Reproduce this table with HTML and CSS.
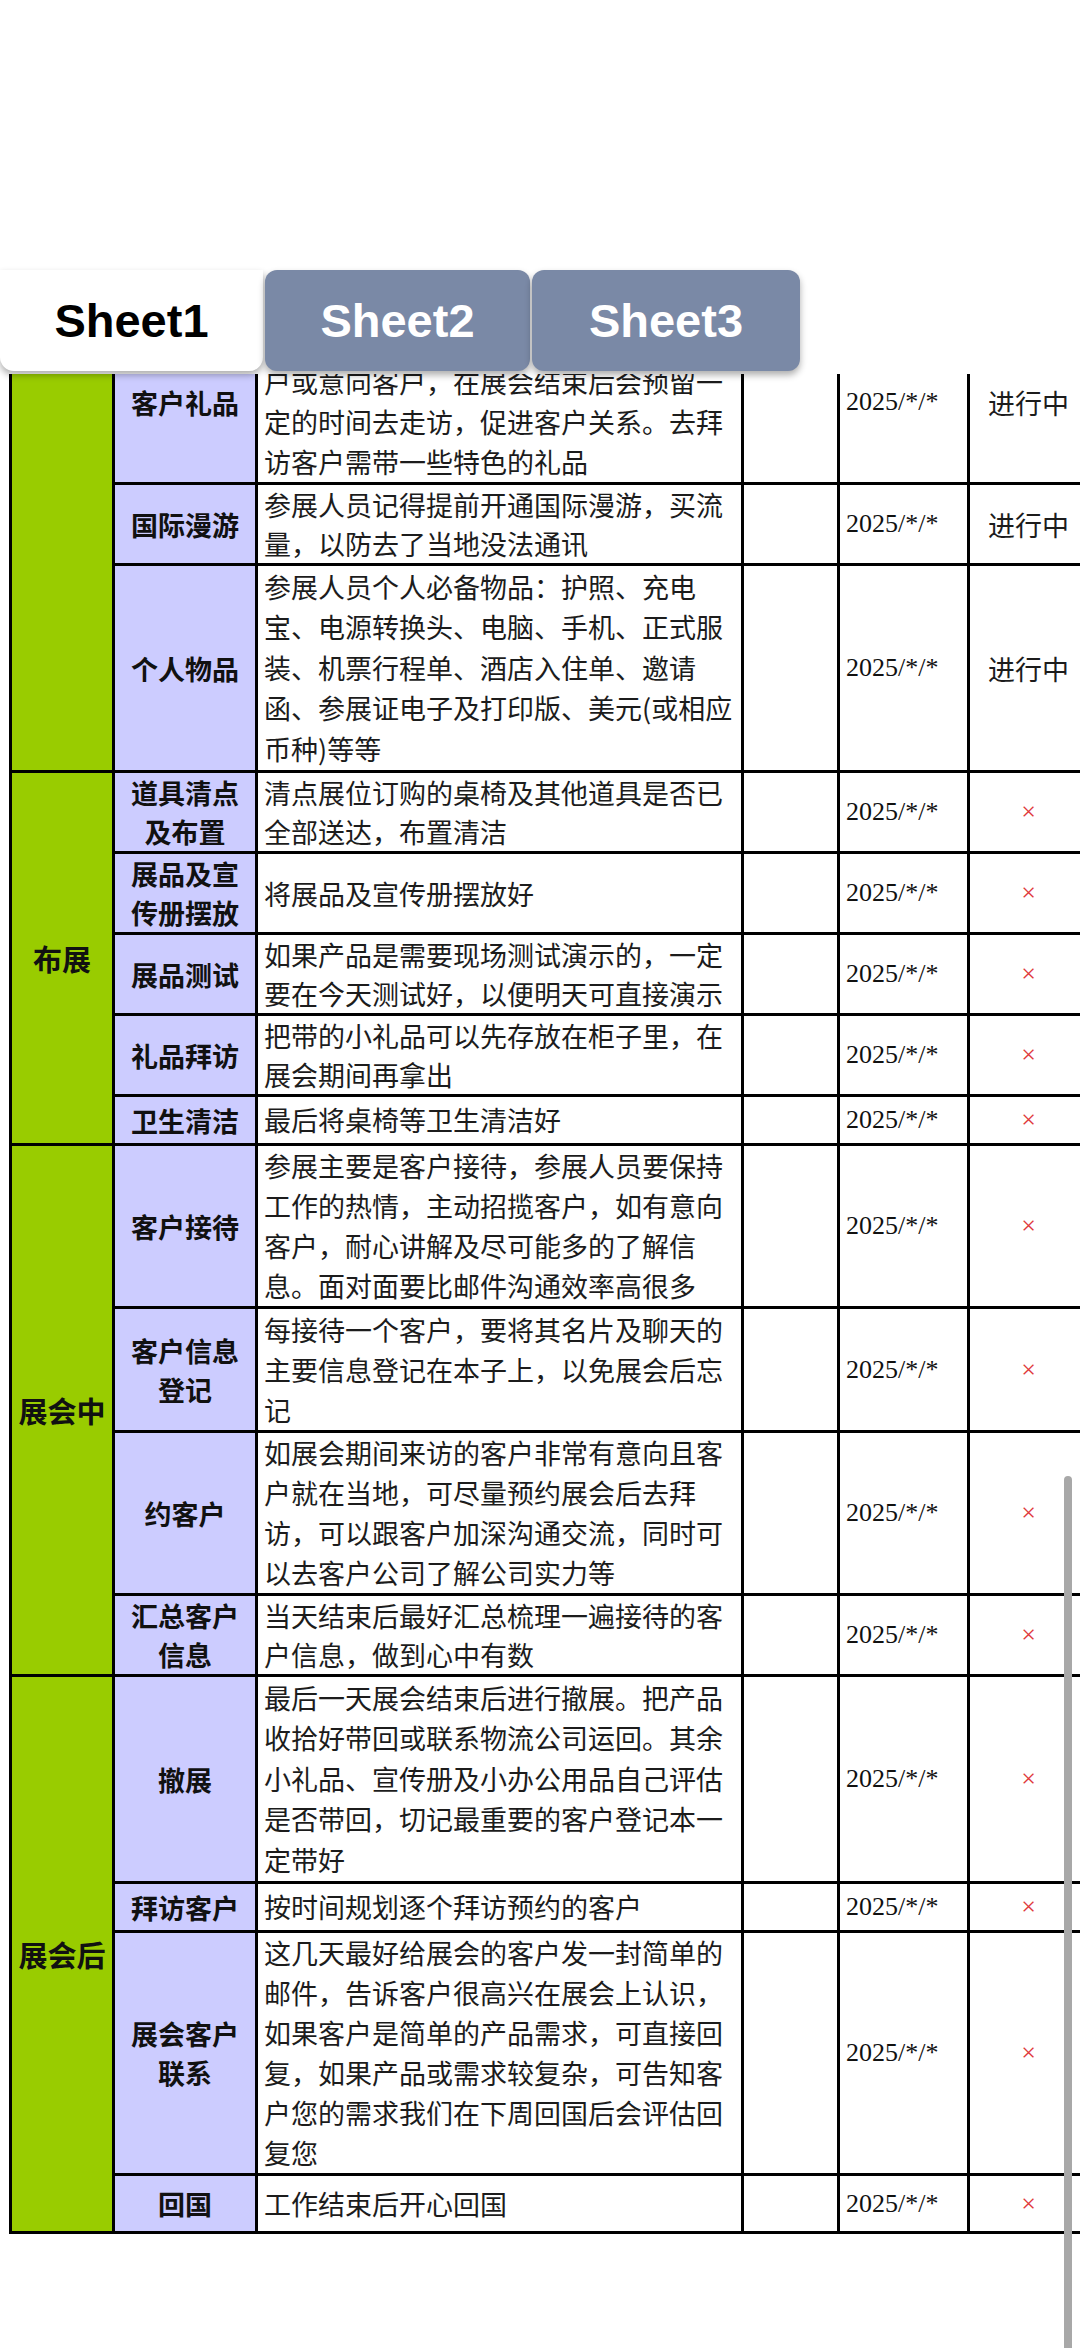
FILE: index.html
```html
<!DOCTYPE html>
<html lang="zh-CN">
<head>
<meta charset="utf-8">
<title>展会计划</title>
<link rel="stylesheet" href="styles.css">
</head>
<body>
<div class="app">
  <header class="topbar">
    <nav class="tabs">
      <div class="tab active">Sheet1</div>
      <div class="tab">Sheet2</div>
      <div class="tab t3">Sheet3</div>
    </nav>
  </header>
  <main class="sheet">
    <table class="grid">
      <colgroup>
        <col class="c-grp"><col class="c-lbl"><col class="c-desc"><col class="c-empty"><col class="c-date"><col class="c-st">
      </colgroup>
      <tbody>
        <tr class="l4">
          <td class="grp" rowspan="3"></td>
          <td class="lbl">客户礼品</td>
          <td class="desc cont">户或意向客户，在展会结束后会预留一定的时间去走访，促进客户关系。去拜访客户需带一些特色的礼品</td>
          <td></td><td class="date">2025/*/*</td><td class="st">进行中</td>
        </tr>
        <tr class="l2">
          <td class="lbl">国际漫游</td>
          <td class="desc">参展人员记得提前开通国际漫游，买流量，以防去了当地没法通讯</td>
          <td></td><td class="date">2025/*/*</td><td class="st">进行中</td>
        </tr>
        <tr class="l5">
          <td class="lbl">个人物品</td>
          <td class="desc">参展人员个人必备物品：护照、充电宝、电源转换头、电脑、手机、正式服装、机票行程单、酒店入住单、邀请函、参展证电子及打印版、美元(或相应币种)等等</td>
          <td></td><td class="date">2025/*/*</td><td class="st">进行中</td>
        </tr>

        <tr class="l2">
          <td class="grp" rowspan="5">布展</td>
          <td class="lbl">道具清点及布置</td>
          <td class="desc">清点展位订购的桌椅及其他道具是否已全部送达，布置清洁</td>
          <td></td><td class="date">2025/*/*</td><td class="st x">×</td>
        </tr>
        <tr class="l2">
          <td class="lbl">展品及宣传册摆放</td>
          <td class="desc">将展品及宣传册摆放好</td>
          <td></td><td class="date">2025/*/*</td><td class="st x">×</td>
        </tr>
        <tr class="l2">
          <td class="lbl">展品测试</td>
          <td class="desc">如果产品是需要现场测试演示的，一定要在今天测试好，以便明天可直接演示</td>
          <td></td><td class="date">2025/*/*</td><td class="st x">×</td>
        </tr>
        <tr class="l2">
          <td class="lbl">礼品拜访</td>
          <td class="desc">把带的小礼品可以先存放在柜子里，在展会期间再拿出</td>
          <td></td><td class="date">2025/*/*</td><td class="st x">×</td>
        </tr>
        <tr class="l1">
          <td class="lbl">卫生清洁</td>
          <td class="desc">最后将桌椅等卫生清洁好</td>
          <td></td><td class="date">2025/*/*</td><td class="st x">×</td>
        </tr>

        <tr class="l4">
          <td class="grp" rowspan="4">展会中</td>
          <td class="lbl">客户接待</td>
          <td class="desc">参展主要是客户接待，参展人员要保持工作的热情，主动招揽客户，如有意向客户，耐心讲解及尽可能多的了解信息。面对面要比邮件沟通效率高很多</td>
          <td></td><td class="date">2025/*/*</td><td class="st x">×</td>
        </tr>
        <tr class="l3">
          <td class="lbl">客户信息登记</td>
          <td class="desc">每接待一个客户，要将其名片及聊天的主要信息登记在本子上，以免展会后忘记</td>
          <td></td><td class="date">2025/*/*</td><td class="st x">×</td>
        </tr>
        <tr class="l4">
          <td class="lbl">约客户</td>
          <td class="desc">如展会期间来访的客户非常有意向且客户就在当地，可尽量预约展会后去拜访，可以跟客户加深沟通交流，同时可以去客户公司了解公司实力等</td>
          <td></td><td class="date">2025/*/*</td><td class="st x">×</td>
        </tr>
        <tr class="l2">
          <td class="lbl">汇总客户信息</td>
          <td class="desc">当天结束后最好汇总梳理一遍接待的客户信息，做到心中有数</td>
          <td></td><td class="date">2025/*/*</td><td class="st x">×</td>
        </tr>

        <tr class="l5">
          <td class="grp" rowspan="4">展会后</td>
          <td class="lbl">撤展</td>
          <td class="desc">最后一天展会结束后进行撤展。把产品收拾好带回或联系物流公司运回。其余小礼品、宣传册及小办公用品自己评估是否带回，切记最重要的客户登记本一定带好</td>
          <td></td><td class="date">2025/*/*</td><td class="st x">×</td>
        </tr>
        <tr class="l1">
          <td class="lbl">拜访客户</td>
          <td class="desc">按时间规划逐个拜访预约的客户</td>
          <td></td><td class="date">2025/*/*</td><td class="st x">×</td>
        </tr>
        <tr class="l6">
          <td class="lbl">展会客户联系</td>
          <td class="desc">这几天最好给展会的客户发一封简单的邮件，告诉客户很高兴在展会上认识，如果客户是简单的产品需求，可直接回复，如果产品或需求较复杂，可告知客户您的需求我们在下周回国后会评估回复您</td>
          <td></td><td class="date">2025/*/*</td><td class="st x">×</td>
        </tr>
        <tr class="l1b">
          <td class="lbl">回国</td>
          <td class="desc">工作结束后开心回国</td>
          <td></td><td class="date">2025/*/*</td><td class="st x">×</td>
        </tr>
      </tbody>
    </table>
  </main>
  <div class="scrollbar"></div>
</div>
</body>
</html>
```

FILE: styles.css
```css
html, body {
  margin: 0;
  padding: 0;
  background: #ffffff;
}

body {
  width: 1080px;
  height: 2348px;
  overflow: hidden;
  font-family: "Noto Sans CJK SC", "Noto Sans", sans-serif;
  color: #1a1a1a;
}

.app {
  position: relative;
  width: 1080px;
  height: 2348px;
  overflow: hidden;
}

/* ---------- tab bar ---------- */
.topbar {
  position: relative;
  z-index: 2;
  height: 374px;
  padding-top: 270px;
  box-sizing: border-box;
  background: #ffffff;
}

.tabs {
  display: flex;
  gap: 2px;
}

.tab {
  width: 265px;
  height: 101px;
  display: flex;
  align-items: center;
  justify-content: center;
  background: #7a89a6;
  color: #ffffff;
  font-family: "Liberation Sans", Arial, sans-serif;
  font-weight: bold;
  font-size: 47px;
  border-radius: 12px;
  box-shadow: 0 4px 7px rgba(0, 0, 0, 0.32);
}

.tab.active {
  width: 263px;
  background: #ffffff;
  color: #000000;
  border-radius: 0 0 14px 14px;
}

.tab.t3 {
  width: 268px;
}

/* ---------- sheet ---------- */
.sheet {
  position: relative;
  z-index: 1;
  height: 1974px;
  overflow: hidden;
}

.grid {
  table-layout: fixed;
  border-collapse: collapse;
  width: 1078px;
  margin-top: -55px;
  margin-left: 9px;
}

.c-grp { width: 103px; }
.c-lbl { width: 143px; }
.c-desc { width: 486px; }
.c-empty { width: 96px; }
.c-date { width: 130px; }
.c-st { width: 120px; }

.grid td {
  border: 3px solid #000000;
  padding: 0;
  vertical-align: middle;
  background: #ffffff;
}

.l1 { height: 49px; }
.l1b { height: 58px; }
.l2 { height: 81px; }
.l3 { height: 124px; }
.l4 { height: 163px; }
.l5 { height: 207px; }
.l6 { height: 243px; }

.grid td.grp {
  background: #99cc00;
  text-align: center;
  font-weight: bold;
  font-size: 29px;
  color: #111111;
}

.grid td.lbl {
  background: #ccccff;
  text-align: center;
  font-weight: bold;
  font-size: 27px;
  line-height: 39px;
  padding: 0 10px;
  color: #111111;
}

.grid td.desc {
  font-size: 27px;
  line-height: 40px;
  padding: 0 2px 0 6px;
  color: #1c1c1c;
}

.l2 td.desc { line-height: 39px; }
.l5 td.desc { line-height: 40.5px; }

.grid td.desc.cont {
  padding-top: 40px;
}

.grid td.date {
  font-family: "Liberation Serif", "Times New Roman", serif;
  font-size: 26px;
  padding-left: 6px;
  color: #111111;
}

.grid td.st {
  text-align: center;
  font-size: 27px;
  color: #1c1c1c;
}

.grid td.st.x {
  font-family: "Liberation Serif", "Times New Roman", serif;
  font-size: 26px;
  color: #e0393c;
}

/* ---------- scrollbar overlay ---------- */
.scrollbar {
  position: absolute;
  z-index: 3;
  left: 1064px;
  top: 1476px;
  width: 8px;
  bottom: 0;
  background: #a8a8a8;
  border-radius: 4px 4px 0 0;
}
```
